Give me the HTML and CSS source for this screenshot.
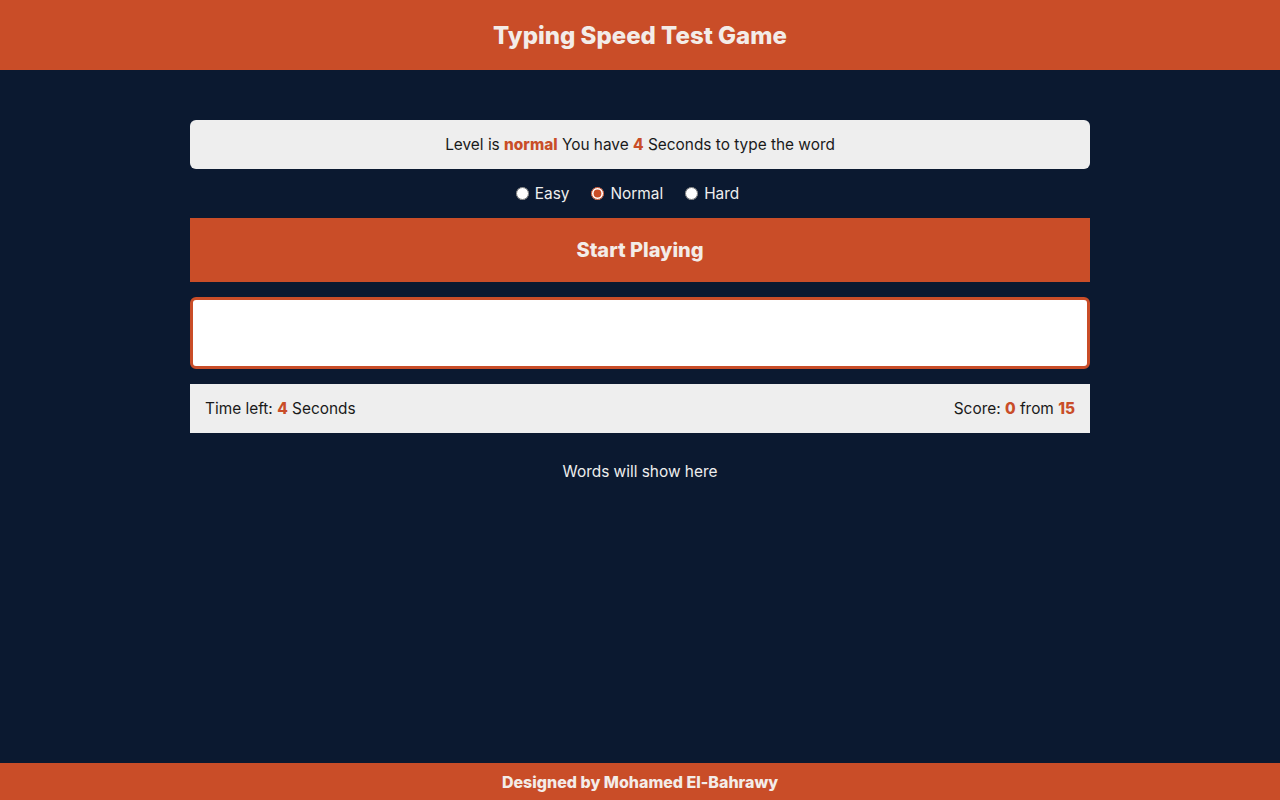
FILE: index.html
```html
<!DOCTYPE html>
<html lang="en">
<head>
<meta charset="utf-8">
<title>Typing Speed Test Game</title>
<link rel="stylesheet" href="styles.css">
</head>
<body>
<div class="page">
  <header class="top">Typing Speed Test Game</header>
  <main class="game">
    <div class="message">Level is <span class="hl">normal</span> You have <span class="hl">4</span> Seconds to type the word</div>
    <div class="levels">
      <label class="lvl"><input type="radio" name="lvl"> Easy</label>
      <label class="lvl"><input type="radio" name="lvl" checked> Normal</label>
      <label class="lvl"><input type="radio" name="lvl"> Hard</label>
    </div>
    <div class="start">Start Playing</div>
    <input class="input" type="text">
    <div class="control">
      <span>Time left: <span class="hl">4</span> Seconds</span>
      <span>Score: <span class="hl">0</span> from <span class="hl">15</span></span>
    </div>
    <div class="words">Words will show here</div>
  </main>
  <footer class="foot">Designed by Mohamed El-Bahrawy</footer>
</div>
</body>
</html>
```
FILE: styles.css
```css
* { box-sizing: border-box; }
html, body { margin: 0; padding: 0; }
body {
  background: #0b1930;
  font-family: Inter, "Noto Sans", sans-serif;
  color: #1a1a1a;
}
.page {
  min-height: 800px;
  display: flex;
  flex-direction: column;
}
.top {
  background: #c94d28;
  color: #f3ece8;
  height: 70px;
  display: flex;
  align-items: center;
  justify-content: center;
  font-size: 24px;
  font-weight: 800;
}
.game {
  flex: 1;
  width: 900px;
  margin: 50px auto 0;
  display: flex;
  flex-direction: column;
}
.message {
  background: #eeeeee;
  border-radius: 6px;
  height: 49px;
  display: flex;
  align-items: center;
  justify-content: center;
  font-size: 15.4px;
  white-space: pre;
}
.hl { color: #c94d28; font-weight: 800; }
.levels {
  height: 49px;
  display: flex;
  justify-content: center;
  align-items: center;
  gap: 22px;
  color: #eeeeee;
  font-size: 15.4px;
  padding-right: 25px;
}
.lvl { display: flex; align-items: center; gap: 4px; }
.lvl input {
  margin: 0 2px 0 0;
  width: 13px;
  height: 13px;
  accent-color: #c94d28;
}
.start {
  background: #c94d28;
  color: #f3ece8;
  height: 64px;
  display: flex;
  align-items: center;
  justify-content: center;
  font-size: 20px;
  font-weight: 800;
}
.input {
  margin-top: 15px;
  height: 72px;
  border: 3px solid #c94d28;
  border-radius: 6px;
  background: #fff;
  outline: none;
  width: 100%;
}
.control {
  margin-top: 15px;
  height: 49px;
  background: #eeeeee;
  display: flex;
  justify-content: space-between;
  align-items: center;
  padding: 0 15px;
  font-size: 15.4px;
}
.words {
  margin-top: 29px;
  text-align: center;
  color: #eeeeee;
  font-size: 15.4px;
}
.foot {
  background: #c94d28;
  color: #f3ece8;
  height: 37px;
  display: flex;
  align-items: center;
  justify-content: center;
  font-size: 16px;
  font-weight: 800;
}
```
